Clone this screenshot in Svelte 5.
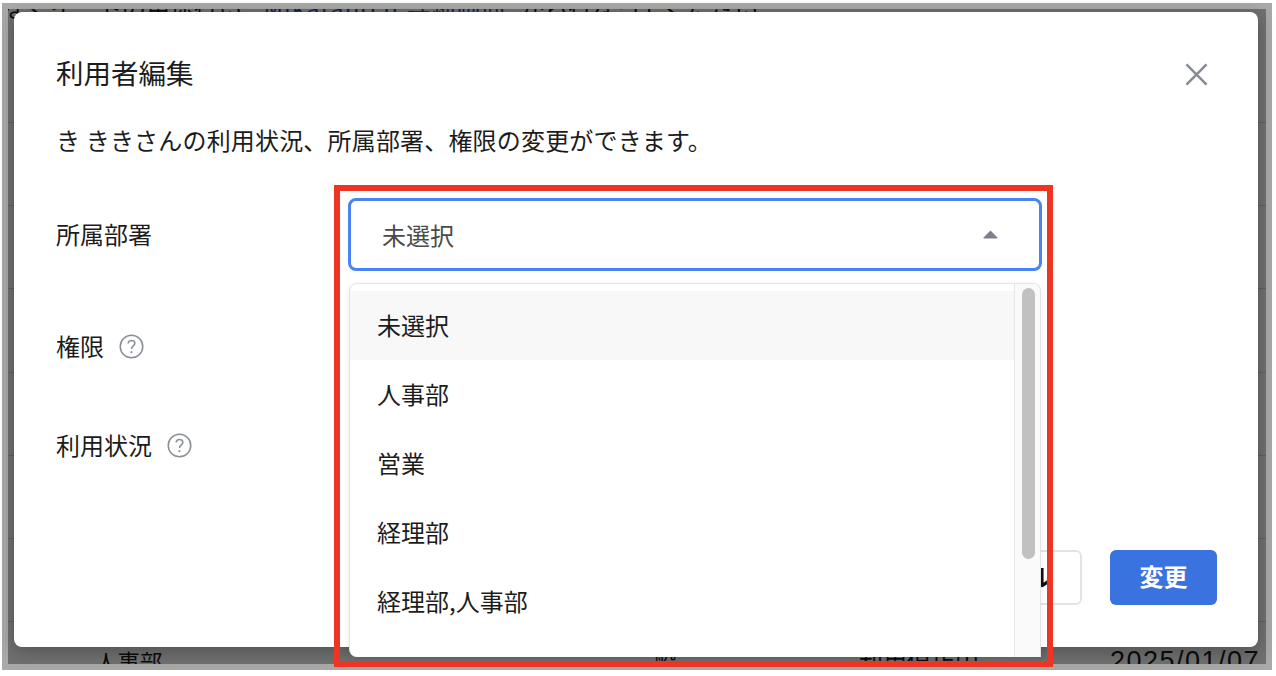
<script>
  const departments = ['未選択', '人事部', '営業', '経理部', '経理部,人事部'];
</script>

<div class="frame">
  <div class="screen">
    <p class="notice">なくイートの用途行い <span class="link">Mikatano II 詳細画面</span> <span class="tail">から行なってください</span></p>
    <div class="rules">
      {#each Array(7) as _}
        <div class="rule"></div>
      {/each}
    </div>
    <div class="table-row">
      <span class="c-dept">人事部</span>
      <span class="c-role">一般</span>
      <span class="c-status">利用停止中</span>
      <span class="c-date">2025/01/07</span>
    </div>
    <div class="overlay"></div>
  </div>

  <section class="modal">
    <header class="head">
      <h2>利用者編集</h2>
      <svg class="close" viewBox="0 0 24 24" aria-hidden="true">
        <path d="M1.5 1.5 22.5 22.5M22.5 1.5 1.5 22.5" />
      </svg>
    </header>
    <p class="desc">き ききさんの利用状況、所属部署、権限の変更ができます。</p>

    <div class="form">
      <div class="row first">
        <span class="label">所属部署</span>
        <div class="select">
          <span>未選択</span>
          <svg class="caret" viewBox="0 0 15 9" aria-hidden="true">
            <path d="M7.5 .6 14.2 7.2Q14.8 8.6 13.4 8.6H1.6Q.2 8.6 .8 7.2Z" />
          </svg>
        </div>
      </div>
      <div class="row second">
        <span class="label">権限</span>
        <svg class="help" viewBox="0 0 24 24" aria-hidden="true">
          <circle cx="12" cy="12" r="10.8" />
          <path d="M8.8 9.2C8.9 7.2 10.3 6.2 12 6.2C13.9 6.2 15.2 7.4 15.2 9C15.2 11.3 12 11.6 12 14.4" />
          <circle class="dot" cx="12" cy="17.4" r="1" />
        </svg>
      </div>
      <div class="row third">
        <span class="label">利用状況</span>
        <svg class="help" viewBox="0 0 24 24" aria-hidden="true">
          <circle cx="12" cy="12" r="10.8" />
          <path d="M8.8 9.2C8.9 7.2 10.3 6.2 12 6.2C13.9 6.2 15.2 7.4 15.2 9C15.2 11.3 12 11.6 12 14.4" />
          <circle class="dot" cx="12" cy="17.4" r="1" />
        </svg>
      </div>
    </div>

    <footer class="foot">
      <button class="btn cancel">キャンセル</button>
      <button class="btn primary">変更</button>
    </footer>

    <div class="menu">
      <ul>
        {#each departments as d, i}
          <li class:active={i === 0}>{d}</li>
        {/each}
      </ul>
      <div class="track"><div class="thumb"></div></div>
    </div>
  </section>

  <div class="annotation"></div>
</div>

<style>
  :global(body) {
    margin: 0;
    background: #fff;
    font-family: "Noto Sans CJK JP", "Noto Sans", sans-serif;
    color: #1c1c1c;
  }
  .frame {
    position: relative;
    box-sizing: border-box;
    width: 1270px;
    height: 667px;
    margin: 3px 0 0 2px;
    padding: 6px;
    background: #a9a9a7;
  }
  .screen {
    position: relative;
    height: 655px;
    overflow: hidden;
    background: #fff;
  }
  .notice {
    margin: -17px 0 0 -6px;
    font-size: 24px;
    line-height: 30px;
    white-space: nowrap;
  }
  .link { margin-left: 16px; color: #1f4fb5; letter-spacing: 1.2px; }
  .tail { margin-left: 8px; }
  .rules {
    position: absolute;
    top: 113px;
    left: 0;
    right: 0;
    display: flex;
    flex-direction: column;
    gap: 82.2px;
  }
  .rule { height: 1px; background: #d8d8d8; }
  .table-row {
    position: absolute;
    top: 637px;
    left: 0;
    right: 0;
    height: 40px;
    font-size: 22.5px;
    line-height: 30px;
  }
  .table-row span { position: absolute; top: 0; white-space: nowrap; }
  .c-dept { left: 87px; }
  .c-role { left: 623px; }
  .c-status { left: 851px; font-size: 24px; }
  .c-date {
    left: 1102px;
    font-family: "Liberation Sans", sans-serif;
    font-size: 27px;
    letter-spacing: 1.5px;
  }
  .overlay {
    position: absolute;
    inset: 0;
    background: rgba(0, 0, 0, 0.56);
  }
  .modal {
    position: absolute;
    left: 12px;
    top: 9px;
    box-sizing: border-box;
    width: 1244px;
    height: 634.5px;
    padding: 0 41px 42px 42px;
    display: flex;
    flex-direction: column;
    background: #fff;
    border-radius: 8px;
    box-shadow: 0 4px 18px rgba(0, 0, 0, 0.28);
  }
  .head {
    display: flex;
    align-items: center;
    justify-content: space-between;
    height: 40px;
    margin-top: 40px;
  }
  h2 {
    margin: 0;
    font-size: 27.5px;
    font-weight: 400;
    line-height: 40px;
  }
  .close {
    width: 23px;
    height: 23px;
    margin-right: 9px;
    margin-top: 4px;
    fill: none;
    stroke: #858a93;
    stroke-width: 2.6;
  }
  .desc {
    margin: 28px 0 0;
    font-size: 24px;
    line-height: 40px;
    letter-spacing: 0.18px;
    white-space: nowrap;
  }
  .form { display: flex; flex-direction: column; }
  .row { display: flex; align-items: center; gap: 15px; }
  .row.first { margin-top: 38px; height: 72.5px; gap: 196px; }
  .row.second { margin-top: 39.5px; height: 72px; }
  .row.third { margin-top: 43px; height: 40px; }
  .label { font-size: 24px; line-height: 36px; }
  .help {
    width: 25px;
    height: 25px;
    fill: none;
    stroke: #8a8f98;
    stroke-width: 1.5;
  }
  .help .dot { fill: #8a8f98; stroke: none; }
  .select {
    box-sizing: border-box;
    width: 694px;
    height: 72.5px;
    padding: 0 41px 0 31px;
    display: flex;
    align-items: center;
    justify-content: space-between;
    border: 3px solid #4a84f4;
    border-radius: 8px;
    font-size: 24px;
    color: #4a4a4a;
  }
  .caret { width: 15px; height: 9px; fill: #7b808a; }
  .foot {
    margin-top: auto;
    display: flex;
    justify-content: flex-end;
    gap: 28px;
  }
  .btn {
    height: 55px;
    border-radius: 6px;
    font-family: inherit;
    font-size: 24px;
    font-weight: 700;
    cursor: pointer;
  }
  .cancel {
    width: 180px;
    padding: 0 0 4px;
    background: #fff;
    border: 2px solid #e1e4e6;
    color: #111;
  }
  .primary {
    width: 107px;
    padding: 0 0 4px;
    background: #3a73e0;
    border: 0;
    color: #fff;
  }
  .menu {
    position: absolute;
    left: 335px;
    top: 270.5px;
    box-sizing: border-box;
    width: 692px;
    height: 374.5px;
    display: flex;
    overflow: hidden;
    background: #fff;
    border: 1px solid #e4e4e4;
    border-bottom: 0;
    border-radius: 8px 8px 0 8px;
    box-shadow: 0 2px 6px rgba(0, 0, 0, 0.08);
  }
  ul {
    flex: 1;
    margin: 0;
    padding: 7.5px 0 0;
    list-style: none;
  }
  li {
    height: 69px;
    padding-left: 27px;
    font-size: 24px;
    line-height: 67px;
    color: #1c1c1c;
  }
  li.active { background: #f8f8f8; }
  .track {
    box-sizing: border-box;
    width: 26px;
    padding: 4.5px 4px 0 7px;
    background: #fafafa;
    border-left: 1px solid #e8e8e8;
  }
  .thumb {
    height: 271px;
    width: 13px;
    border-radius: 7px;
    background: #c1c1c1;
  }
  .annotation {
    position: absolute;
    left: 332px;
    top: 182px;
    box-sizing: border-box;
    width: 719px;
    height: 482px;
    border: 6px solid #ee3524;
    pointer-events: none;
  }
</style>
